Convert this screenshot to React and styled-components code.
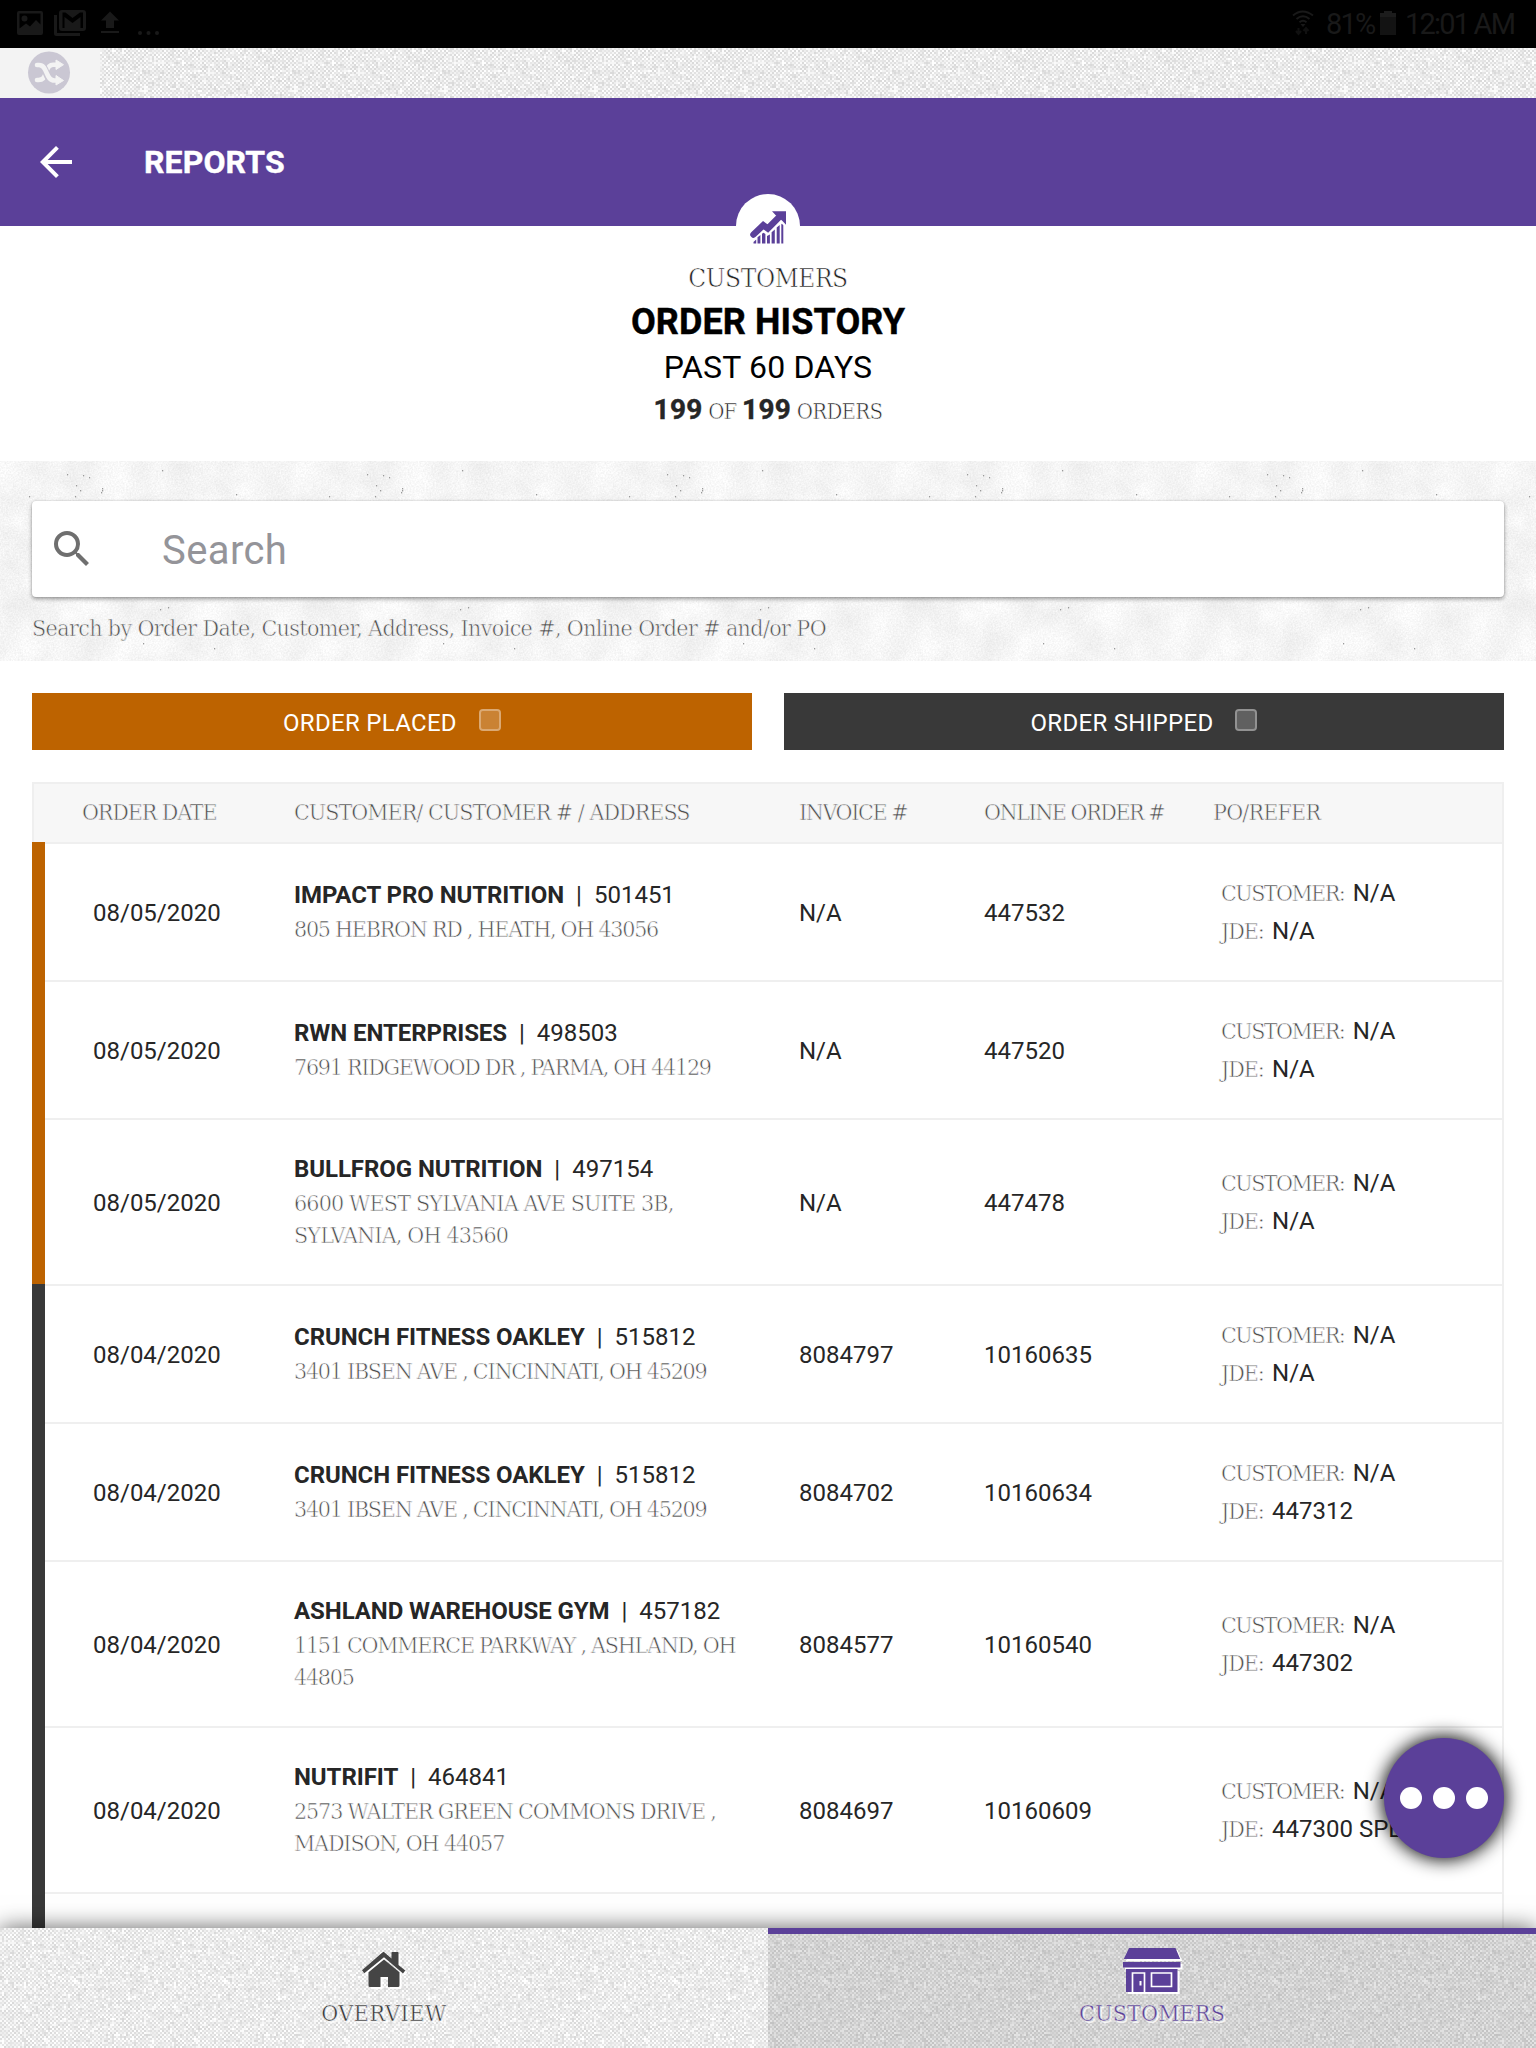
import React from 'react'
import styled, { createGlobalStyle } from 'styled-components'
import { MdArrowBack, MdSearch } from 'react-icons/md'

const PURPLE = '#5b4099'
const ORANGE = '#bd6300'
const DARK = '#393939'
const LINE = '#efefef'

const svgUrl = (svg) => `url("data:image/svg+xml,${encodeURIComponent(svg)}")`

// woven cloth: 2px cells, light and dark alternating along the diagonal
const makeWeave = () => {
  const cells = 75
  const paths = {}
  let seed = 11
  const rand = () => {
    seed = (seed * 16807) % 2147483647
    return seed / 2147483647
  }
  for (let y = 0; y < cells; y++) {
    for (let x = 0; x < cells; x++) {
      const flip = rand() < 0.08
      const light = (x + y) % 2 === 0 ? !flip : flip
      const shade = light
        ? 238 + Math.floor(rand() * 5) * 4
        : 218 + Math.floor(rand() * 4) * 4
      paths[shade] = (paths[shade] || '') + `M${x} ${y}h1v1h-1z`
    }
  }
  const body = Object.entries(paths)
    .map(([s, d]) => `<path fill="rgb(${s},${s},${s})" d="${d}"/>`)
    .join('')
  return svgUrl(
    `<svg xmlns="http://www.w3.org/2000/svg" width="150" height="150" viewBox="0 0 75 75" shape-rendering="crispEdges">${body}</svg>`
  )
}

const specks = [
  [83, 14], [89, 16], [76, 24], [75, 35], [102, 27], [102, 29], [67, 13],
  [101, 31], [80, 29], [162, 9], [236, 33], [145, 124], [143, 182],
  [160, 148], [168, 146], [29, 35], [235, 120], [204, 130], [214, 187],
]

const concrete = svgUrl(`<svg xmlns="http://www.w3.org/2000/svg" width="300" height="200">
<filter id="c" x="0" y="0" width="100%" height="100%" color-interpolation-filters="sRGB">
<feTurbulence type="fractalNoise" baseFrequency="0.03" numOctaves="5" seed="4" stitchTiles="stitch"/>
<feColorMatrix values="1 0 0 0 0 1 0 0 0 0 1 0 0 0 0 0 0 0 0 1" result="big"/>
<feTurbulence type="fractalNoise" baseFrequency="0.6" numOctaves="2" seed="9" stitchTiles="stitch"/>
<feColorMatrix values="1 0 0 0 0 1 0 0 0 0 1 0 0 0 0 0 0 0 0 1" result="fine"/>
<feComposite in="big" in2="fine" operator="arithmetic" k2="0.08" k3="0.1" k4="0.87"/>
</filter>
<rect width="300" height="200" filter="url(#c)"/>
<g fill="#9a9a9a">${specks
  .map(([x, y]) => `<rect x="${x}" y="${y}" width="1.2" height="1.4"/>`)
  .join('')}</g></svg>`)

const weave = makeWeave()

const GlobalStyle = createGlobalStyle`
  * {
    box-sizing: border-box;
  }
  body {
    margin: 0;
    background: white;
    font-family: Roboto, sans-serif;
    color: #262626;
  }
`

const Page = styled.div`
  position: relative;
  display: flex;
  flex-direction: column;
  width: 1536px;
  height: 2048px;
  overflow: hidden;
`

const StatusBar = styled.div`
  display: flex;
  justify-content: space-between;
  height: 48px;
  flex: none;
  background: black;
`

const StatusInfo = styled.div`
  display: flex;
  align-items: center;
  padding-right: 17px;
  font-size: 29px;
  line-height: 48px;
  letter-spacing: -1.8px;
  color: #191919;
`

const StatusText = styled.span`
  width: ${(props) => props.$width}px;
  white-space: nowrap;
`

const Strip = styled.div`
  height: 50px;
  flex: none;
  background: ${weave};
`

const StripBadge = styled.div`
  width: 100px;
  height: 50px;
  background: #f3f3f3;
`

const Header = styled.header`
  display: flex;
  align-items: center;
  gap: 64px;
  height: 128px;
  flex: none;
  padding-left: 32px;
  background: ${PURPLE};
  color: white;
`

const HeaderTitle = styled.h1`
  margin: 0;
  font-size: 32px;
  font-weight: 700;
  letter-spacing: 0.1px;
  -webkit-text-stroke: 0.4px;
`

// light slab lettering: the outline in the background colour slims the strokes
const Slab = styled.span`
  font-family: 'DejaVu Serif Condensed', 'DejaVu Serif', serif;
  font-size: ${(props) => props.$size || 23}px;
  letter-spacing: ${(props) => props.$spacing || '-1.1px'};
  color: ${(props) => props.$color || '#4c4c4c'};
  -webkit-text-stroke: 0.6px ${(props) => props.$ground || 'white'};
`

const Summary = styled.section`
  position: relative;
  display: flex;
  flex-direction: column;
  align-items: center;
  height: 235px;
  flex: none;
  padding-top: 32px;
  color: black;
`

const SummaryBadge = styled.div`
  position: absolute;
  top: -32px;
  left: 736px;
  width: 64px;
  height: 64px;
  border-radius: 50%;
  background: white;
`

const SummaryLine = styled.div`
  font-size: ${(props) => props.$size}px;
  font-weight: ${(props) => props.$weight || 400};
  line-height: ${(props) => props.$line}px;
  letter-spacing: ${(props) => props.$spacing || 'normal'};
  -webkit-text-stroke: ${(props) => (props.$weight ? '0.4px' : '0')};
  white-space: nowrap;
`

const Count = styled.b`
  font-size: 28px;
  font-weight: 700;
  letter-spacing: 0.3px;
  color: #262626;
  -webkit-text-stroke: 0.4px;
`

const SearchArea = styled.section`
  height: 200px;
  flex: none;
  padding: 40px 32px 0;
  background: ${concrete};
`

const SearchBox = styled.div`
  display: flex;
  align-items: center;
  gap: 66px;
  height: 96px;
  padding-left: 16px;
  border-radius: 4px;
  background: white;
  box-shadow: 0 2px 4px rgba(0, 0, 0, 0.38), 0 0 2px rgba(0, 0, 0, 0.15);
  color: #6f6f6f;
`

const Placeholder = styled.span`
  padding-top: 2px;
  font-size: 40px;
  letter-spacing: 0.4px;
  color: #949499;
`

const Hint = styled.div`
  margin-top: 11px;
  line-height: 40px;
  white-space: nowrap;
`

const Filters = styled.div`
  display: grid;
  grid-template-columns: 1fr 1fr;
  gap: 32px;
  flex: none;
  padding: 32px;
`

const Filter = styled.div`
  display: flex;
  align-items: center;
  justify-content: center;
  gap: 22px;
  height: 57px;
  background: ${(props) => props.$color};
  color: white;
  font-size: 24px;
  letter-spacing: 0.3px;
`

const FilterLabel = styled.span`
  padding-top: 2px;
`

const CheckBox = styled.span`
  width: 22px;
  height: 22px;
  margin-bottom: 3px;
  border: 2px solid rgba(255, 255, 255, 0.45);
  border-radius: 4px;
  background: rgba(255, 255, 255, 0.2);
  background-clip: padding-box;
`

const Table = styled.div`
  display: flex;
  flex-direction: column;
  flex: 1;
  min-height: 0;
  overflow: hidden;
  margin: 0 32px;
`

const TableHead = styled.div`
  display: grid;
  grid-template-columns: 212px 505px 185px 229px 1fr;
  align-items: center;
  height: 60px;
  flex: none;
  padding: 0 0 2px 48px;
  border: 2px solid ${LINE};
  border-bottom: none;
  background: #f7f7f7;
`

const Row = styled.div`
  display: flex;
  flex: ${(props) => (props.$height ? 'none' : 1)};
  height: ${(props) => (props.$height ? props.$height + 'px' : 'auto')};
`

const Bar = styled.div`
  width: 13px;
  background: ${(props) => props.$color};
`

const Cells = styled.div`
  display: grid;
  grid-template-columns: 201px 505px 185px 237px 1fr;
  align-items: center;
  flex: 1;
  padding-left: 48px;
  border-top: 2px solid ${LINE};
  border-right: 2px solid ${LINE};
  font-size: 24px;
`

const Cell = styled.div`
  padding-top: 1px;
  white-space: nowrap;
`

const Customer = styled.div`
  width: 455px;
  padding-bottom: 3px;
  line-height: 36px;
`

const Name = styled.b`
  font-weight: 700;
  letter-spacing: -0.07px;
`

const Pipe = styled.span`
  margin: 0 12px;
`

const Address = styled.div`
  line-height: 32px;
`

const Reference = styled.div`
  line-height: 38px;
  white-space: nowrap;
`

const RefLabel = styled(Slab)`
  margin-right: 8.5px;
`

const FloatingButton = styled.button`
  position: absolute;
  right: 32px;
  bottom: 190px;
  display: flex;
  align-items: center;
  justify-content: center;
  gap: 11px;
  width: 120px;
  height: 120px;
  padding: 0;
  border: none;
  border-radius: 50%;
  background: ${PURPLE};
  box-shadow: 0 0 18px 2px rgba(0, 0, 0, 0.95);
`

const Dot = styled.span`
  width: 22px;
  height: 22px;
  border-radius: 50%;
  background: white;
`

const Nav = styled.nav`
  position: relative;
  display: grid;
  grid-template-columns: 1fr 1fr;
  height: 120px;
  flex: none;
  background: ${weave};
  box-shadow: 0 0 22px rgba(0, 0, 0, 0.62);
`

const Tab = styled.div`
  display: flex;
  flex-direction: column;
  align-items: center;
  padding-top: ${(props) => (props.$active ? 14 : 20)}px;
  border-top: ${(props) => (props.$active ? `6px solid ${PURPLE}` : 'none')};
  background: ${(props) =>
    props.$active ? 'rgba(0, 0, 0, 0.1)' : 'transparent'};

  svg {
    filter: drop-shadow(2px 2px 0 white);
  }
`

const TabLabel = styled(Slab)`
  margin-top: 4px;
  line-height: 32px;
  text-shadow: 2px 2px 0 rgba(255, 255, 255, 0.75);
  -webkit-text-stroke-width: 0.5px;
`

const StatusIcons = () => (
  <svg width="180" height="48" fill="#191919">
    <path
      fillRule="evenodd"
      d="M19 11h22a2 2 0 0 1 2 2v20a2 2 0 0 1-2 2H19a2 2 0 0 1-2-2V13a2 2 0 0 1 2-2zM19.500 13.500v15l6.500-5 4 3 6-6.500 4.500 4.500v-11zM24.500 15.500a3 3 0 1 1 0 6 3 3 0 0 1 0-6z"
    />
    <path d="M54 15h3v18h23v3H56.500a2.500 2.500 0 0 1-2.500-2.500z" />
    <path
      fillRule="evenodd"
      d="M62 10h21a3 3 0 0 1 3 3v15a3 3 0 0 1-3 3H62a3 3 0 0 1-3-3V13a3 3 0 0 1 3-3zm.5 2.500v15.500H64.500V17l8 6 8-6v11h2.500V12.500h-3l-7.500 5.500-7-5.500z"
    />
    <path d="M110 11.500l9 9h-5v7.500h-8v-7.500h-5zM101 31h18v2h-18z" />
    <circle cx="140" cy="33" r="2" />
    <circle cx="148.500" cy="33" r="2" />
    <circle cx="157" cy="33" r="2" />
  </svg>
)

const WifiIcon = () => (
  <svg width="34" height="48" fill="none" stroke="#191919" strokeWidth="2">
    <path d="M1 15.500q9.500-8 20 0M4.500 19q6.500-5.500 13 0M7.500 22.300q3.500-3 7 0" />
    <path d="M8.500 24h5l-2.500 3z" fill="#191919" stroke="none" />
    <path d="M6.500 28v5M4 31l2.500 3 2.500-3M14 34v-5M11.500 31l2.500-3 2.500 3" stroke="#101010" />
  </svg>
)

const BatteryIcon = () => (
  <svg width="25" height="48" fill="#131313">
    <path d="M0 17h16v18H0z" />
    <path d="M0 13h4v-2h8v2h4v4H0z" fill="#1c1c1c" />
  </svg>
)

const ShuffleIcon = () => (
  <svg width="100" height="50">
    <circle cx="49" cy="24.500" r="21" fill="#cac7d3" />
    <g fill="none" stroke="#f3f3f3" strokeWidth="4.600">
      <path d="M37 32h1.500c4.500 0 6-2.500 7.500-7.500s3-7.800 7-7.800h4.500" strokeLinecap="round" />
      <path d="M37 17h2c9 0 5 15.500 15 15.500h3" stroke="#cac7d3" strokeWidth="7" />
      <path d="M37 17h2c9 0 6 15.500 15.500 15.500h2.500" strokeLinecap="round" />
    </g>
    <path
      d="M56 12v9.500l7.500-4.800zM56 27.500V37l7.500-4.500z"
      fill="#f3f3f3"
      stroke="#f3f3f3"
      strokeWidth="1"
      strokeLinejoin="round"
    />
  </svg>
)

const TrendIcon = () => (
  <svg width="64" height="64">
    <path
      d="M17.500 40.500L27.300 31.200 31.800 34.500 42 24.200"
      fill="none"
      stroke={PURPLE}
      strokeWidth="6.500"
      strokeLinecap="round"
    />
    <path d="M36 17.200h14v13.600l-3.500-3.800-7-6z" fill={PURPLE} />
    <path
      fill={PURPLE}
      d="M17.500 49.500v-1.500l2.700-2.500v4zM21.500 49.500v-6.200l2.900-2.300v8.500zM26 49.500v-9.800l1.500-1 1.900 1.300v9.500zM31 49.500v-7.500l2.900-1.500v9zM35.600 49.500v-11.200l3.200-2.800v14zM40.700 49.500v-16l3-2.600v18.600zM45.300 49.500V30.200l.6-.5 1.400 1.500v18.300z"
    />
  </svg>
)

const HomeIcon = () => (
  <svg width="46" height="45" fill="#454545">
    <path d="M23 4l7.500 6.500V4.800q0-.8.800-.8h5.400q.8 0 .8.800V17l6.800 5.400-2.300 3L23 9.300 3.300 25.200 1 22.200 20.800 5Q23 3.300 23 4z" />
    <path d="M23 11.500L38.500 24.200V37.500q0 1.500-1.500 1.500H27V29h-7.500v10H9q-1.500 0-1.500-1.500V24.200z" />
  </svg>
)

const StoreIcon = () => (
  <svg width="58" height="45" fill={PURPLE}>
    <path d="M6 0h46.500l4.700 11H.8zM0 14h57.500v5.500H0z" />
    <path d="M3 21h51.500v23H3z" />
    <g fill="none" stroke="white" strokeWidth="1.700">
      <path d="M9.500 44V25h12v19M28.500 25h20v13.500h-20z" />
    </g>
    <path d="M16.500 33h2v4.500h-2z" fill="white" />
  </svg>
)

const orders = [
  { date: '08/05/2020', name: 'IMPACT PRO NUTRITION', number: '501451', address: '805 HEBRON RD , HEATH, OH 43056', invoice: 'N/A', online: '447532', jde: 'N/A' },
  { date: '08/05/2020', name: 'RWN ENTERPRISES', number: '498503', address: '7691 RIDGEWOOD DR , PARMA, OH 44129', invoice: 'N/A', online: '447520', jde: 'N/A' },
  { date: '08/05/2020', name: 'BULLFROG NUTRITION', number: '497154', address: '6600 WEST SYLVANIA AVE SUITE 3B, SYLVANIA, OH 43560', invoice: 'N/A', online: '447478', jde: 'N/A', tall: true, spacing: '-0.82px' },
  { date: '08/04/2020', name: 'CRUNCH FITNESS OAKLEY', number: '515812', address: '3401 IBSEN AVE , CINCINNATI, OH 45209', invoice: '8084797', online: '10160635', jde: 'N/A', shipped: true },
  { date: '08/04/2020', name: 'CRUNCH FITNESS OAKLEY', number: '515812', address: '3401 IBSEN AVE , CINCINNATI, OH 45209', invoice: '8084702', online: '10160634', jde: '447312', shipped: true },
  { date: '08/04/2020', name: 'ASHLAND WAREHOUSE GYM', number: '457182', address: '1151 COMMERCE PARKWAY , ASHLAND, OH 44805', invoice: '8084577', online: '10160540', jde: '447302', shipped: true, tall: true },
  { date: '08/04/2020', name: 'NUTRIFIT', number: '464841', address: '2573 WALTER GREEN COMMONS DRIVE , MADISON, OH 44057', invoice: '8084697', online: '10160609', jde: '447300 SPE', shipped: true, tall: true, spacing: '-1.12px' },
]

const columns = [
  { title: 'ORDER DATE', spacing: '-1.1px' },
  { title: 'CUSTOMER/ CUSTOMER # / ADDRESS', spacing: '-0.97px' },
  { title: 'INVOICE #', spacing: '-1.4px' },
  { title: 'ONLINE ORDER #', spacing: '-1.45px' },
  { title: 'PO/REFER', spacing: '-0.8px' },
]

const OrderRow = ({ order }) => (
  <Row $height={order.tall ? 166 : 138}>
    <Bar $color={order.shipped ? DARK : ORANGE} />
    <Cells>
      <Cell>{order.date}</Cell>
      <Customer>
        <Name>{order.name}</Name>
        <Pipe>|</Pipe>
        {order.number}
        <Address>
          <Slab $spacing={order.spacing || '-1.25px'}>{order.address}</Slab>
        </Address>
      </Customer>
      <Cell>{order.invoice}</Cell>
      <Cell>{order.online}</Cell>
      <Reference>
        <div>
          <RefLabel $spacing="-1.55px">CUSTOMER:</RefLabel>N/A
        </div>
        <div>
          <RefLabel>JDE:</RefLabel>
          {order.jde}
        </div>
      </Reference>
    </Cells>
  </Row>
)

export default function App() {
  return (
    <>
      <GlobalStyle />
      <Page>
        <StatusBar>
          <StatusIcons />
          <StatusInfo>
            <WifiIcon />
            <StatusText $width={54}>81%</StatusText>
            <BatteryIcon />
            <StatusText $width={114}>12:01 AM</StatusText>
          </StatusInfo>
        </StatusBar>
        <Strip>
          <StripBadge>
            <ShuffleIcon />
          </StripBadge>
        </Strip>
        <Header>
          <MdArrowBack size={48} />
          <HeaderTitle>REPORTS</HeaderTitle>
        </Header>
        <Summary>
          <SummaryBadge>
            <TrendIcon />
          </SummaryBadge>
          <SummaryLine $size={26} $line={40}>
            <Slab $size={26} $spacing="-0.4px" $color="#222">
              CUSTOMERS
            </Slab>
          </SummaryLine>
          <SummaryLine $size={36} $line={48} $weight={700} $spacing="0.1px">
            ORDER HISTORY
          </SummaryLine>
          <SummaryLine $size={32} $line={43} $spacing="0.2px">
            PAST 60 DAYS
          </SummaryLine>
          <SummaryLine $size={28} $line={41}>
            <Count>199</Count>
            <Slab $size={22} $spacing="-0.8px" $color="#222"> OF </Slab>
            <Count>199</Count>
            <Slab $size={22} $spacing="-0.7px" $color="#222"> ORDERS</Slab>
          </SummaryLine>
        </Summary>
        <SearchArea>
          <SearchBox>
            <MdSearch size={48} />
            <Placeholder>Search</Placeholder>
          </SearchBox>
          <Hint>
            <Slab $spacing="-0.62px" $ground="#f5f5f5">
              Search by Order Date, Customer, Address, Invoice #, Online Order #
              and/or PO
            </Slab>
          </Hint>
        </SearchArea>
        <Filters>
          <Filter $color={ORANGE}>
            <FilterLabel>ORDER PLACED</FilterLabel>
            <CheckBox />
          </Filter>
          <Filter $color={DARK}>
            <FilterLabel>ORDER SHIPPED</FilterLabel>
            <CheckBox />
          </Filter>
        </Filters>
        <Table>
          <TableHead>
            {columns.map(({ title, spacing }) => (
              <Slab key={title} $spacing={spacing} $ground="#f7f7f7">
                {title}
              </Slab>
            ))}
          </TableHead>
          {orders.map((order) => (
            <OrderRow key={order.invoice + order.online} order={order} />
          ))}
          <Row>
            <Bar $color={DARK} />
            <Cells />
          </Row>
        </Table>
        <Nav>
          <Tab>
            <HomeIcon />
            <TabLabel $spacing="0.6px" $color="#333" $ground="#eee">
              OVERVIEW
            </TabLabel>
          </Tab>
          <Tab $active>
            <StoreIcon />
            <TabLabel $spacing="0.2px" $color={PURPLE} $ground="#ddd">
              CUSTOMERS
            </TabLabel>
          </Tab>
        </Nav>
        <FloatingButton>
          <Dot />
          <Dot />
          <Dot />
        </FloatingButton>
      </Page>
    </>
  )
}
